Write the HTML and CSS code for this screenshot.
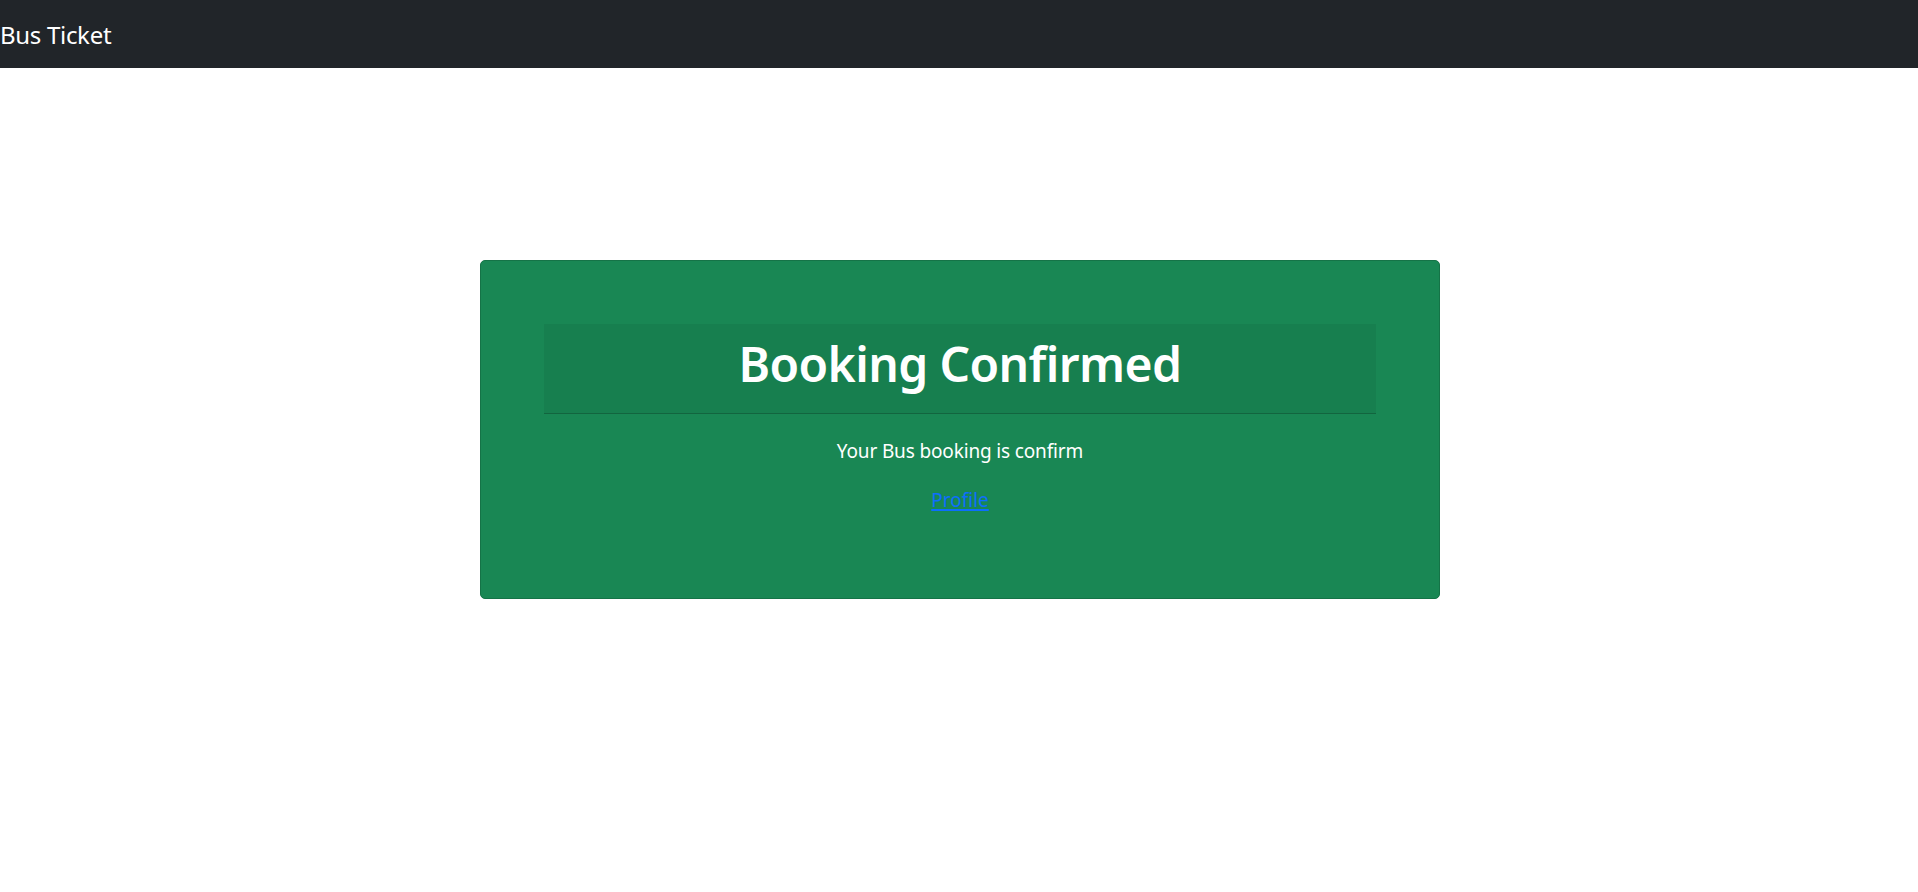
FILE: index.html
```html
<!DOCTYPE html>
<html lang="en">
<head>
<meta charset="utf-8">
<title>Bus Ticket</title>
<link rel="stylesheet" href="styles.css">
</head>
<body>
<nav class="navbar">
  <a class="brand" href="#">Bus Ticket</a>
</nav>
<main class="page">
  <section class="card">
    <div class="card-header">
      <h1 class="title">Booking Confirmed</h1>
    </div>
    <p class="message">Your Bus booking is confirm</p>
    <p class="actions"><a class="link" href="#">Profile</a></p>
  </section>
</main>
</body>
</html>
```
FILE: styles.css
```css
* { box-sizing: border-box; }
html, body { margin: 0; padding: 0; }
body {
  font-family: "Noto Sans", "Open Sans", "DejaVu Sans", sans-serif;
  background: #ffffff;
  color: #212529;
}
.navbar {
  height: 68px;
  background: #212529;
  display: flex;
  align-items: center;
}
.brand {
  color: #ffffff;
  text-decoration: none;
  font-size: 24px;
  letter-spacing: -0.3px;
  line-height: 67px;
}
.page {
  display: flex;
  justify-content: center;
  padding-top: 192px;
  padding-left: 2px;
}
.card {
  width: 960px;
  background: #198754;
  border: 1px solid #157347;
  border-radius: 5px;
  padding: 63px 63px 64px;
  text-align: center;
}
.card-header {
  background: rgba(0, 0, 0, 0.06);
  border-bottom: 1px solid rgba(0, 0, 0, 0.2);
  padding: 10px 0 19px;
}
.title {
  margin: 0;
  color: #ffffff;
  font-size: 48px;
  letter-spacing: -0.6px;
  line-height: 60px;
  font-weight: 600;
}
.message {
  margin: 22px 0 19px;
  color: #ffffff;
  font-size: 19px;
  letter-spacing: -0.15px;
  line-height: 30px;
}
.actions {
  margin: 0 0 19px;
  font-size: 19px;
  line-height: 30px;
}
.link {
  color: #0d6efd;
  text-decoration: underline;
  text-decoration-thickness: 2px;
  text-underline-offset: 2px;
}
```
